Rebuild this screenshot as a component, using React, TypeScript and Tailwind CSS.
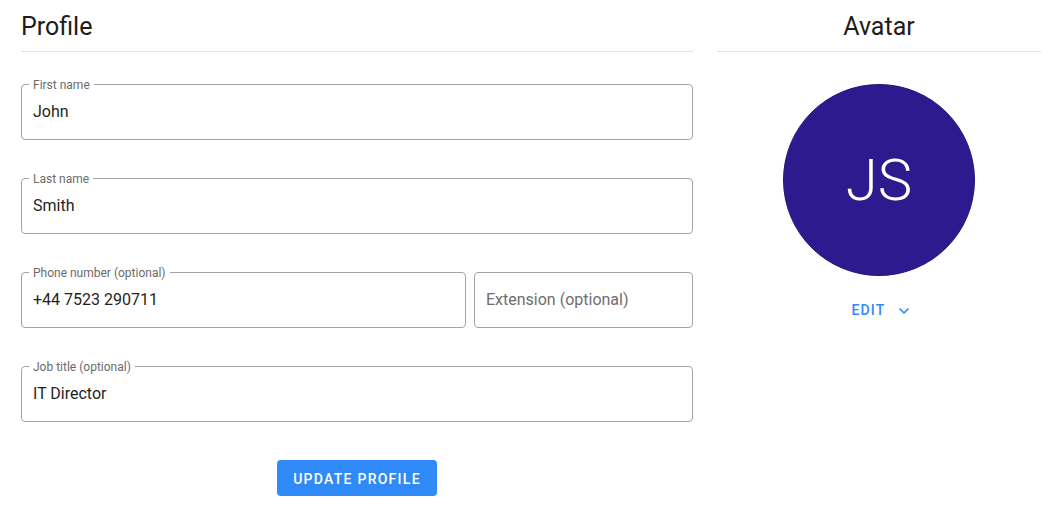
import { ChevronDown } from "lucide-react";

type FieldProps = {
  label?: string;
  value?: string;
  placeholder?: string;
  className?: string;
};

function OutlinedField({ label, value, placeholder, className }: FieldProps) {
  return (
    <div className={`relative h-14 rounded-[4px] border border-[#a3a3a3] ${className ?? ""}`}>
      {label && (
        <span className="absolute -top-[8px] left-[7px] bg-white px-[4px] text-[12px] leading-[16px] text-[#6b6b6b]">
          {label}
        </span>
      )}
      <div className="flex h-full items-center px-[11px] text-[16px]">
        {value ? (
          <span className="text-[#1f1f1f]">{value}</span>
        ) : (
          <span className="text-[#6e6e6e]">{placeholder}</span>
        )}
      </div>
    </div>
  );
}

export default function App() {
  return (
    <div className="flex min-h-[517px] gap-6 bg-white pl-[21px] pr-[18px] font-['Roboto','Liberation_Sans',sans-serif]">
      <div className="flex flex-1 flex-col">
        <div className="flex h-[52px] items-center border-b border-[#e3e3e3] pt-[3px]">
          <h1 className="text-[25px] font-normal text-[#1c1c1c]">Profile</h1>
        </div>
        <div className="mt-8 flex flex-col gap-[38px]">
          <OutlinedField label="First name" value="John" />
          <OutlinedField label="Last name" value="Smith" />
          <div className="flex gap-2">
            <OutlinedField label="Phone number (optional)" value="+44 7523 290711" className="flex-1" />
            <OutlinedField placeholder="Extension (optional)" className="w-[219px]" />
          </div>
          <OutlinedField label="Job title (optional)" value="IT Director" />
        </div>
        <div className="mt-[38px] flex justify-center">
          <button className="h-9 w-40 rounded-[4px] bg-[#2f8af7] pt-[2px] text-[14px] font-medium tracking-[0.09em] text-white">
            UPDATE PROFILE
          </button>
        </div>
      </div>
      <div className="flex w-[324px] flex-col items-center">
        <div className="flex h-[52px] w-full items-center justify-center border-b border-[#e3e3e3] pt-[3px]">
          <h2 className="text-[25px] font-normal text-[#1c1c1c]">Avatar</h2>
        </div>
        <div className="mt-8 flex h-[192px] w-[192px] items-center justify-center rounded-full border border-[#25157a] bg-[#2e1a8f]">
          <span className="text-[58px] font-light text-white">JS</span>
        </div>
        <button className="ml-[6px] mt-4 flex h-9 items-center gap-[11px] px-2 pt-[1px] text-[14px] font-medium tracking-[0.08em] text-[#2f8af7]">
          EDIT
          <ChevronDown size={16} strokeWidth={2.5} />
        </button>
      </div>
    </div>
  );
}
